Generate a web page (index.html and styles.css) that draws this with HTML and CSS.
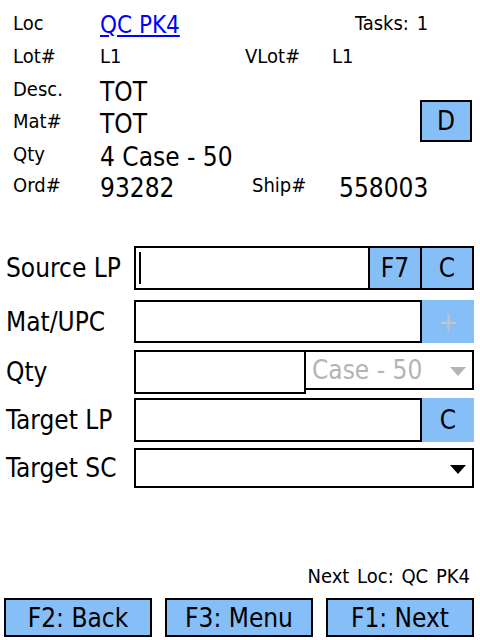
FILE: index.html
```html
<!DOCTYPE html>
<html lang="en">
<head>
  <meta charset="UTF-8">
  <meta name="viewport" content="width=device-width, initial-scale=1">
  <title>Pick Task</title>
  <link rel="stylesheet" href="styles.css">
</head>
<body>
  <div class="screen">
    <section class="info">
      <span class="cap lead">Loc</span>
      <a class="val link" href="#">QC PK4</a>
      <span class="cap tasks">Tasks: 1</span>

      <span class="cap lead">Lot#</span>
      <span class="val">L1</span>
      <span class="cap">VLot#</span>
      <span class="val">L1</span>

      <span class="cap lead">Desc.</span>
      <span class="val big">TOT</span>

      <span class="cap lead">Mat#</span>
      <span class="val big">TOT</span>

      <span class="cap lead">Qty</span>
      <span class="val big">4 Case - 50</span>

      <span class="cap lead">Ord#</span>
      <span class="val big">93282</span>
      <span class="cap shift ship">Ship#</span>
      <span class="val big shift">558003</span>

      <button class="key d-key">D</button>
    </section>

    <section class="form">
      <div class="entry-row">
        <span class="label">Source LP</span>
        <div class="combo boxed">
          <div class="text"><span class="caret"></span></div>
          <button class="key">F7</button>
          <button class="key">C</button>
        </div>
      </div>

      <div class="entry-row row-mat">
        <span class="label">Mat/UPC</span>
        <div class="combo">
          <div class="text framed"></div>
          <button class="key flat" disabled>+</button>
        </div>
      </div>

      <div class="entry-row row-qty">
        <span class="label">Qty</span>
        <div class="combo">
          <div class="text framed qty-box"></div>
          <div class="picker off">
            <span>Case - 50</span>
            <svg class="arrow" width="16" height="9" viewBox="0 0 16 9"><polygon points="0,0 16,0 8,9"/></svg>
          </div>
        </div>
      </div>

      <div class="entry-row row-tlp">
        <span class="label">Target LP</span>
        <div class="combo">
          <div class="text framed"></div>
          <button class="key flat">C</button>
        </div>
      </div>

      <div class="entry-row row-tsc">
        <span class="label">Target SC</span>
        <div class="picker wide">
          <span></span>
          <svg class="arrow" width="16" height="9" viewBox="0 0 16 9"><polygon points="0,0 16,0 8,9"/></svg>
        </div>
      </div>
    </section>

    <footer>
      <div class="next-loc">Next Loc: QC PK4</div>
      <div class="actions">
        <button class="act">F2: Back</button>
        <button class="act">F3: Menu</button>
        <button class="act">F1: Next</button>
      </div>
    </footer>
  </div>
</body>
</html>
```

FILE: styles.css
```css
body {
  margin: 0;
  background: #ffffff;
  color: #000000;
  font-family: "DejaVu Sans Condensed", "Liberation Sans", sans-serif;
}

button {
  font-family: inherit;
  color: #000;
  padding: 0;
  margin: 0;
}

.screen {
  width: 480px;
  height: 640px;
  display: flex;
  flex-direction: column;
  box-sizing: border-box;
}

/* task header */
.info {
  display: grid;
  grid-template-columns: 87px 145px 87px 88px 52px;
  grid-template-rows: 33px 33px 32px 33px 31px 32px;
  padding: 13px 0 0 13px;
  white-space: nowrap;
}

.cap {
  font-size: 20px;
  line-height: 20px;
}

.lead {
  grid-column: 1;
}

.val {
  font-size: 20px;
  line-height: 20px;
}

.val.big {
  font-size: 26px;
  line-height: 26px;
}

.val.link {
  color: #0000ff;
  text-decoration: underline;
  justify-self: start;
  font-size: 24px;
  line-height: 24px;
}

.tasks {
  grid-column: 4 / span 2;
  padding-left: 23px;
  word-spacing: 2px;
}

.shift {
  padding-left: 7px;
}

.key {
  background: #86bef8;
  border: none;
  font-size: 26px;
  line-height: 26px;
  cursor: pointer;
}

.d-key {
  grid-column: 5;
  grid-row: 3 / span 2;
  align-self: end;
  height: 42px;
  width: 52px;
  margin-bottom: 2px;
  border: 2px solid #000;
}

/* entry fields */
.form {
  display: grid;
  grid-template-rows: 44px 53px 51px 48px 46px;
  align-items: end;
  margin-top: 39px;
}

.entry-row {
  display: flex;
  align-items: center;
  height: 44px;
}

.row-mat {
  height: 43px;
}

.row-qty {
  align-items: flex-start;
}

.row-tsc {
  height: 40px;
}

.label {
  width: 134px;
  padding-left: 6px;
  box-sizing: border-box;
  font-size: 26px;
  line-height: 26px;
  white-space: nowrap;
}

.row-qty .label {
  align-self: center;
}

.combo {
  display: flex;
  width: 340px;
  height: 100%;
  box-sizing: border-box;
}

.boxed {
  border: 2px solid #000;
}

.boxed .key {
  width: 52px;
  border-left: 2px solid #000;
}

.text {
  flex: 1;
  display: flex;
  align-items: center;
  box-sizing: border-box;
  background: #fff;
}

.framed {
  border: 2px solid #000;
}

.caret {
  width: 2px;
  height: 32px;
  margin-left: 3px;
  background: #000;
}

.key.flat {
  width: 52px;
}

.key:disabled {
  color: #c4c4c4;
}

.qty-box {
  flex: 0 0 172px;
}

.picker {
  flex: 1;
  display: flex;
  align-items: center;
  justify-content: space-between;
  height: 40px;
  padding: 0 6px 0 6px;
  box-sizing: border-box;
  border: 2px solid #000;
  font-size: 26px;
  line-height: 26px;
}

.picker.off {
  border-left: none;
  color: #b4b4b4;
}

.picker.off .arrow {
  fill: #b4b4b4;
}

.picker.wide {
  flex: 0 0 340px;
}

.arrow {
  fill: #000;
  margin-top: 2px;
}

/* bottom bar */
footer {
  margin-top: auto;
  padding-bottom: 3px;
}

.next-loc {
  text-align: right;
  padding-right: 10px;
  font-size: 20px;
  line-height: 20px;
  word-spacing: 2px;
  margin-bottom: 12px;
}

.actions {
  display: flex;
  justify-content: space-between;
  padding: 0 6px 0 4px;
}

.act {
  width: 148px;
  height: 39px;
  background: #86bef8;
  border: 2px solid #000;
  font-size: 26px;
  line-height: 26px;
  cursor: pointer;
}
```
